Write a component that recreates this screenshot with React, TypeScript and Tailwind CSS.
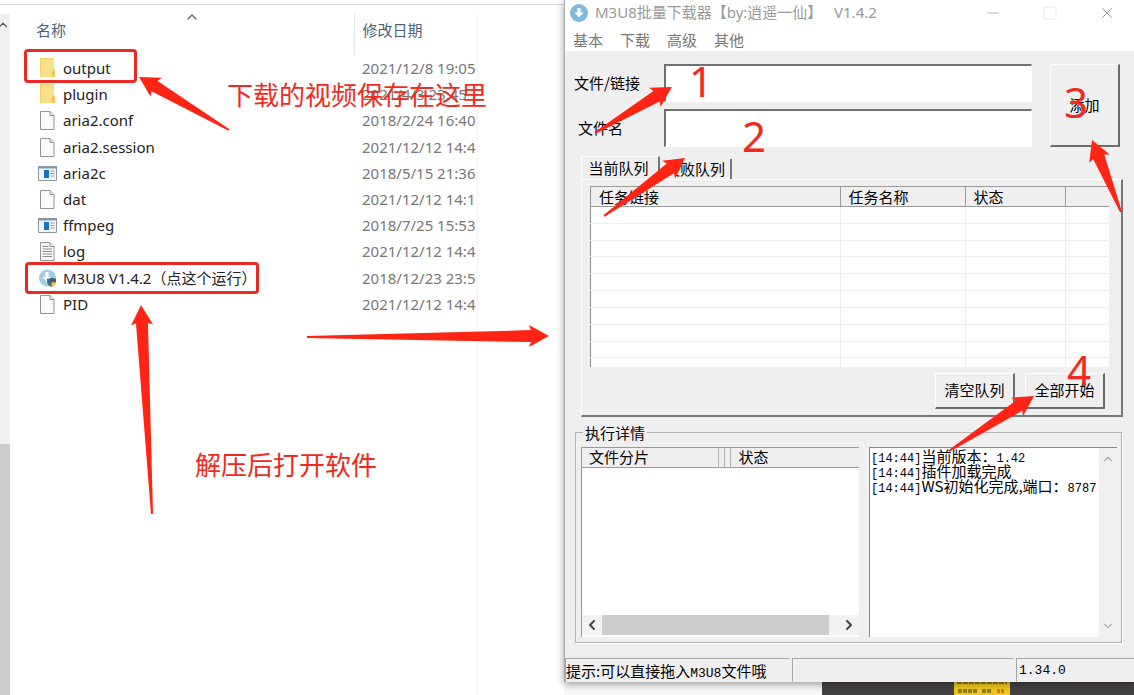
import type { ReactNode } from "react";
import {
  ChevronDown,
  ChevronLeft,
  ChevronRight,
  ChevronUp,
  Minus,
  Square,
  X,
} from "lucide-react";

type FileKind = "folder" | "file" | "exe" | "text" | "app";

const files: { name: string; kind: FileKind; date: string }[] = [
  { name: "output", kind: "folder", date: "2021/12/8 19:05" },
  { name: "plugin", kind: "folder", date: "2021/4/3 23:45" },
  { name: "aria2.conf", kind: "file", date: "2018/2/24 16:40" },
  { name: "aria2.session", kind: "file", date: "2021/12/12 14:4" },
  { name: "aria2c", kind: "exe", date: "2018/5/15 21:36" },
  { name: "dat", kind: "file", date: "2021/12/12 14:1" },
  { name: "ffmpeg", kind: "exe", date: "2018/7/25 15:53" },
  { name: "log", kind: "text", date: "2021/12/12 14:4" },
  { name: "M3U8 V1.4.2（点这个运行）", kind: "app", date: "2018/12/23 23:5" },
  { name: "PID", kind: "file", date: "2021/12/12 14:4" },
];

const logs = [
  { time: "[14:44]", text: "当前版本：", tail: "1.42" },
  { time: "[14:44]", text: "插件加载完成", tail: "" },
  { time: "[14:44]", text: "WS初始化完成,端口：", tail: "8787" },
];

function DownloadIcon() {
  return (
    <svg width="18" height="18" viewBox="0 0 18 18">
      <circle cx="9" cy="9" r="9" fill="#7fb9dd" />
      <path d="M7.4 4h3.2v4.6h3L9 13.4 4.4 8.600h3z" fill="#fff" />
    </svg>
  );
}

function FileIcon(props: { kind: FileKind }) {
  if (props.kind === "folder") {
    return (
      <svg width="20" height="20" viewBox="0 0 20 20">
        <path d="M2 0h14v11l1 1v7H2z" fill="#fbe08a" />
        <path d="M2 0h14v1H2zM2 0h1v19H2z" fill="#f3d06a" />
        <path d="M14 19v-6l2-2 1 2v6z" fill="#f0c75a" />
      </svg>
    );
  }
  if (props.kind === "exe") {
    return (
      <svg width="20" height="20" viewBox="0 0 20 20">
        <path d="M.5 3.500h18v14H.5z" fill="#f4f7f9" stroke="#8b98a3" />
        <path d="M0 3h19v2.500H0z" fill="#8997a4" />
        <path d="M6 7h5v8H6z" fill="#1673c0" />
        <path d="M12.500 8h4M12.500 10.500h4M12.500 13h4" stroke="#8a97a5" />
      </svg>
    );
  }
  if (props.kind === "app") {
    return (
      <svg width="20" height="20" viewBox="0 0 20 20">
        <circle cx="9.500" cy="10" r="8.500" fill="#a3cde9" />
        <path d="M7.500 4h3v5h3l-4.500 5-4.500-5h3z" fill="#fff" />
        <path
          d="M13.500 9.500c1.500 1 3 1.300 4.500 1.300 0 4-1 6.500-4.500 8.200C10 17.300 9 14.800 9 10.800c1.500 0 3-.3 4.500-1.300z"
          fill="#2f6da6"
        />
        <path d="M13.500 9.500c1.500 1 3 1.300 4.500 1.300 0 1.300 0 2.300-.3 3.400h-4.200z" fill="#4d5c68" />
        <path d="M9.300 14.200h4.200V19c-2.500-1.200-3.700-2.700-4.200-4.800z" fill="#5a6670" />
        <path d="M13.500 14.200h4.200c-.5 2.100-1.700 3.600-4.200 4.800z" fill="#e9c83c" />
      </svg>
    );
  }
  return (
    <svg width="20" height="20" viewBox="0 0 20 20">
      <path d="M2.500 1.500h9.500l4 4v14h-13.500z" fill="#fafafa" stroke="#949494" />
      <path d="M12 1.500v4h4" fill="#e6e6e6" stroke="#949494" />
      {props.kind === "text" && (
        <path
          d="M4.500 5.500h6M4.500 8h9.500M4.500 10.500h9.500M4.500 13h9.500M4.500 15.500h9.500"
          stroke="#8c8c8c"
        />
      )}
    </svg>
  );
}

function Explorer() {
  return (
    <section className="flex flex-col bg-white pt-1">
      <div className="h-[10px] border-t border-[#d5d9dc]" />
      <div className="flex flex-1">
        <div className="flex w-[10px] flex-col overflow-hidden bg-[#f0f0f0]">
          <div className="flex h-[430px] justify-end pt-1">
            <ChevronUp className="size-[14px] shrink-0 text-[#555]" />
          </div>
          <div className="flex-1 bg-[#cdcdcd]" />
        </div>
        <div className="w-[468px] overflow-hidden border-r border-[#f3f3f3] pl-[26px]">
          <table className="w-full table-fixed border-collapse text-left font-['Noto_Sans','Noto_Sans_CJK_SC',sans-serif] text-[15px] leading-5">
            <thead>
              <tr className="h-[41px] align-top text-[#4d627a]">
                <th className="w-[318px] pt-[6px] font-normal">
                  <div className="flex">
                    名称
                    <ChevronUp className="ml-[118px] -mt-[11px] size-4 text-[#666]" strokeWidth={2} />
                  </div>
                </th>
                <th className="border-l border-[#e3e8ec] pl-2 pt-[6px] font-normal">
                  修改日期
                </th>
              </tr>
            </thead>
            <tbody className="h-[262px]">
              {files.map((file) => (
                <tr key={file.name}>
                  <td className="p-0">
                    <div className="flex h-5 items-center gap-[5px] pl-[2px] text-[#222]">
                      <FileIcon kind={file.kind} />
                      <span className="whitespace-nowrap">{file.name}</span>
                    </div>
                  </td>
                  <td className="py-0 pr-0 pl-2 text-[#777]">
                    <div className="overflow-hidden whitespace-nowrap">{file.date}</div>
                  </td>
                </tr>
              ))}
            </tbody>
          </table>
        </div>
      </div>
    </section>
  );
}

function RaisedButton(props: { className: string; children: ReactNode }) {
  return (
    <button
      className={
        "border-t border-l border-r-2 border-b-2 border-t-white border-l-white border-r-[#6c6c6c] border-b-[#6c6c6c] bg-[#efefef] text-center " +
        props.className
      }
    >
      {props.children}
    </button>
  );
}

function QueueTable() {
  return (
    <table className="w-full table-fixed border-collapse border-l border-[#8f8f8f] bg-white text-left">
      <thead>
        <tr className="h-5 border-t border-b border-[#9a9a9a] bg-[#efefef] leading-[18px]">
          <th className="border-r border-[#9a9a9a] py-0 pl-2 font-normal">任务链接</th>
          <th className="w-[125px] border-r border-[#9a9a9a] py-0 pl-2 font-normal">任务名称</th>
          <th className="w-[100px] border-r border-[#9a9a9a] py-0 pl-2 font-normal">状态</th>
          <th className="w-[44px] p-0" />
        </tr>
      </thead>
      <tbody className="h-[160px]">
        {Array.from({ length: 10 }, (_, index) => (
          <tr key={index} className="border-b border-[#ededed] last:border-b-0">
            <td className="border-r border-[#ededed] p-0" />
            <td className="border-r border-[#ededed] p-0" />
            <td className="border-r border-[#ededed] p-0" />
            <td className="p-0" />
          </tr>
        ))}
      </tbody>
    </table>
  );
}

function Details() {
  return (
    <fieldset className="mr-3 ml-[10px] mt-[5px] border border-[#b4b4b4] pr-1 pb-[5px] pl-[5px] shadow-[1px_1px_0_#fff]">
      <legend className="ml-[2px] px-[2px] leading-[22px]">执行详情</legend>
      <div className="mt-[3px] flex h-[190px] gap-[10px]">
        <div className="flex w-[278px] flex-col border-t border-l border-[#999] bg-white">
          <table className="w-full table-fixed border-collapse text-left">
            <thead>
              <tr className="h-5 border-b border-[#9a9a9a] bg-[#efefef] leading-[18px]">
                <th className="w-[136px] border-r border-[#b0b0b0] py-0 pl-[7px] font-normal">文件分片</th>
                <th className="w-[6px] border-r border-[#b0b0b0] p-0" />
                <th className="w-[6px] border-r border-[#b0b0b0] p-0" />
                <th className="py-0 pl-2 font-normal">状态</th>
              </tr>
            </thead>
          </table>
          <div className="mt-auto mb-[2px] flex h-5 items-center justify-between bg-[#f2f2f2]">
            <ChevronLeft className="mx-[2px] size-4 text-[#444]" strokeWidth={3} />
            <div className="mr-2 h-full flex-1 bg-[#cdcdcd]" />
            <ChevronRight className="mr-[2px] ml-1 size-4 text-[#444]" strokeWidth={3} />
          </div>
        </div>
        <div className="flex flex-1 border-t border-l border-[#8a8a8a] bg-white">
          <div className="flex-1 pl-px whitespace-nowrap">
            {logs.map((log, index) => (
              <p key={index} className="flex h-[15px] items-baseline leading-[15px]">
                <span className="font-['Liberation_Mono',monospace] text-[12px]">{log.time}</span>
                {log.text}
                <span className="font-['Liberation_Mono',monospace] text-[12px]">{log.tail}</span>
              </p>
            ))}
          </div>
          <div className="flex w-[18px] flex-col items-center justify-between bg-[#f0f0f0] py-1 text-[#b0b0b0]">
            <ChevronUp className="size-[14px]" />
            <ChevronDown className="size-[14px]" />
          </div>
        </div>
      </div>
    </fieldset>
  );
}

function Downloader() {
  return (
    <section className="relative flex flex-col border-l border-[#a8a8a8] bg-[#efefef] text-[15px] text-black shadow-[0_2px_8px_rgba(0,0,0,0.4)]">
      <header className="flex h-[25px] items-center bg-white pr-[18px] pl-[5px] font-['Noto_Sans','Noto_Sans_CJK_SC',sans-serif] text-[#999]">
        <DownloadIcon />
        <h1 className="ml-[7px] flex-1 whitespace-pre">M3U8批量下载器【by:逍遥一仙】   V1.4.2</h1>
        <button aria-label="最小化" className="mr-10">
          <Minus className="size-[18px]" strokeWidth={1} />
        </button>
        <button aria-label="最大化" className="mr-10 text-[#ddd]">
          <Square className="size-4" strokeWidth={1} />
        </button>
        <button aria-label="关闭" className="text-[#777]">
          <X className="size-[18px]" strokeWidth={1} />
        </button>
      </header>
      <nav className="flex h-[26px] items-center gap-[17px] bg-white pt-1 pl-2 text-[#777]">
        <button>基本</button>
        <button>下载</button>
        <button>高级</button>
        <button>其他</button>
      </nav>

      <form className="mt-[13px] mr-[14px] ml-[9px] flex gap-[18px]">
        <div className="grid flex-1 grid-cols-[90px_1fr] items-center gap-y-[7px]">
          <label htmlFor="link">文件/链接</label>
          <input
            id="link"
            className="h-[38px] w-full border-t-2 border-r border-b border-l-2 border-t-[#707070] border-r-white border-b-white border-l-[#707070] bg-white px-2 outline-none"
          />
          <label htmlFor="name" className="pl-1">文件名</label>
          <input
            id="name"
            className="h-[38px] w-full border-t-2 border-r border-b border-l-2 border-t-[#707070] border-r-white border-b-white border-l-[#707070] bg-white px-2 outline-none"
          />
        </div>
        <RaisedButton className="h-[83px] w-[70px]">添加</RaisedButton>
      </form>

      <div className="mt-[9px] ml-4 flex h-[23px] items-end">
        <button className="h-full w-[79px] border-t border-r-2 border-l border-t-white border-r-[#777] border-l-white pr-[3px] leading-5">
          当前队列
        </button>
        <button className="h-5 w-[72px] border-r-2 border-[#777] leading-5">失败队列</button>
      </div>
      <div className="mr-[11px] ml-4 border-t border-r-2 border-b-2 border-l border-t-white border-r-[#777] border-b-[#777] border-l-white pt-[6px] pr-3 pb-[6px] pl-2">
        <QueueTable />
        <div className="mt-[6px] mr-1 flex justify-end gap-[10px]">
          <RaisedButton className="h-9 w-20">清空队列</RaisedButton>
          <RaisedButton className="h-9 w-20">全部开始</RaisedButton>
        </div>
      </div>

      <Details />

      <footer className="mt-[15px] flex h-6 gap-[3px] leading-[23px]">
        <div className="w-[224px] border-t border-l border-[#a5a5a5] whitespace-nowrap">
          提示:可以直接拖入
          <span className="font-['Liberation_Mono',monospace] text-[13px]">M3U8</span>
          文件哦
        </div>
        <div className="flex-1 border-t border-l border-[#a5a5a5]" />
        <div className="w-[118px] border-t border-l border-[#a5a5a5] pl-[2px] font-['Liberation_Mono',monospace] text-[13px]">
          1.34.0
        </div>
      </footer>
    </section>
  );
}

// strip of the desktop that shows under the downloader window
function Desktop() {
  return (
    <div className="flex min-h-3 flex-1 bg-[#f8f8f8] pl-[258px]">
      <div className="flex-1 bg-[#454342] pl-[132px]">
        <svg className="h-[13px] w-[56px] bg-[#efc91c]">
          <path d="M3 1h50" stroke="#8d7a22" strokeWidth="2" strokeDasharray="5 1" />
          <path d="M4 9h20M28 9h10" stroke="#937d1d" strokeWidth="4" strokeDasharray="4 1" />
          <path d="M43 9h8" stroke="#d9772a" strokeWidth="4" strokeDasharray="3 1" />
        </svg>
      </div>
    </div>
  );
}

const arrows = [
  { from: [229, 130], to: [139, 77] },
  { from: [152, 514], to: [141, 305] },
  { from: [307, 337], to: [549, 336] },
  { from: [595, 133], to: [672, 87] },
  { from: [604, 216], to: [685, 158] },
  { from: [1121, 212], to: [1092, 140] },
  { from: [949, 451], to: [1034, 396] },
];

// tapered arrow: a thin tail that widens up to a swept-back head
function arrowPoints(from: number[], to: number[]) {
  const length = Math.hypot(to[0] - from[0], to[1] - from[1]);
  const ux = (to[0] - from[0]) / length;
  const uy = (to[1] - from[1]) / length;
  const at = (back: number, side: number) =>
    `${to[0] - ux * back - uy * side},${to[1] - uy * back + ux * side}`;
  return [
    at(0, 0),
    at(20, 11),
    at(18, 6),
    at(length, 1),
    at(length, -1),
    at(18, -6),
    at(20, -11),
  ].join(" ");
}

function Annotations() {
  return (
    <div className="pointer-events-none absolute inset-0 font-['Noto_Sans','Noto_Sans_CJK_SC',sans-serif] text-[#f02a20]">
      <div className="absolute top-[49px] left-[24px] h-[34px] w-[113px] rounded-[4px] border-[3px] border-[#ea2a22]" />
      <div className="absolute top-[262px] left-[25px] h-[32px] w-[234px] rounded-[4px] border-[3px] border-[#ea2a22]" />
      <p className="absolute top-[75px] left-[227px] text-[26px] leading-10 whitespace-nowrap">
        下载的视频保存在这里
      </p>
      <p className="absolute top-[445px] left-[195px] text-[26px] leading-10 whitespace-nowrap">
        解压后打开软件
      </p>
      <span className="absolute top-[61px] left-[689px] text-[42px] leading-10">1</span>
      <span className="absolute top-[116px] left-[742px] text-[42px] leading-10">2</span>
      <span className="absolute top-[82px] left-[1064px] text-[42px] leading-10">3</span>
      <span className="absolute top-[350px] left-[1067px] text-[42px] leading-10">4</span>
      <svg className="absolute inset-0 size-full">
        {arrows.map((arrow, index) => (
          <polygon key={index} points={arrowPoints(arrow.from, arrow.to)} fill="#ff2414" />
        ))}
      </svg>
    </div>
  );
}

export default function App() {
  return (
    <main className="relative grid min-h-screen grid-cols-[564px_1fr] overflow-hidden bg-white font-['Noto_Sans_CJK_SC',sans-serif]">
      <Explorer />
      <div className="flex flex-col">
        <Downloader />
        <Desktop />
      </div>
      <Annotations />
    </main>
  );
}
